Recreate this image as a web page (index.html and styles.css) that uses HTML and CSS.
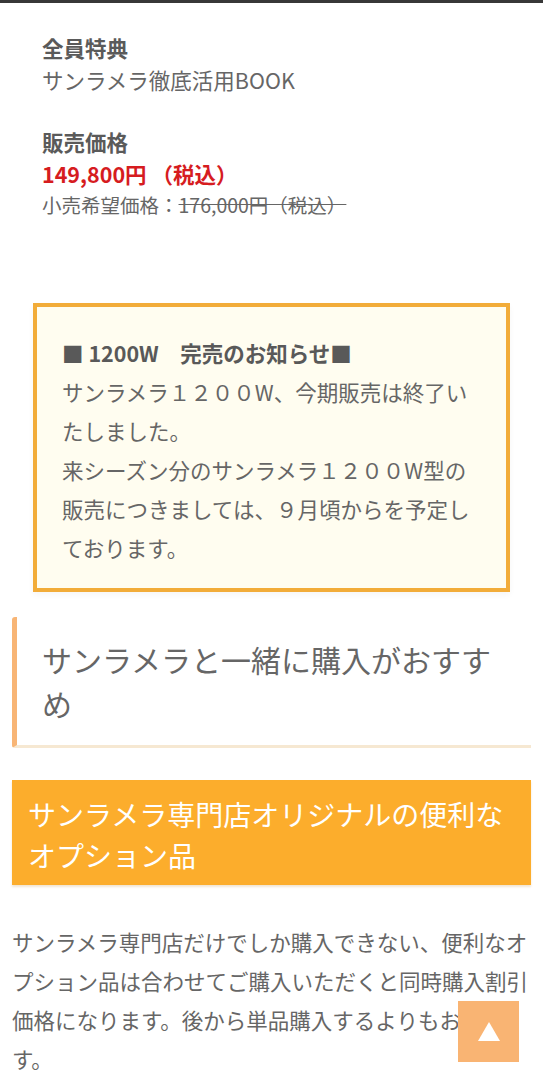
FILE: index.html
```html
<!DOCTYPE html>
<html lang="ja">
<head>
<meta charset="utf-8">
<title>サンラメラ</title>
<link rel="stylesheet" href="styles.css">
</head>
<body>
<div class="topbar"></div>
<main class="page">
  <section class="spec">
    <div class="spec-item">
      <div class="spec-label">全員特典</div>
      <div class="spec-value">サンラメラ徹底活用BOOK</div>
    </div>
    <div class="spec-item">
      <div class="spec-label">販売価格</div>
      <div class="price">149,800円 （税込）</div>
      <div class="list-price">小売希望価格：<s>176,000円（税込）</s></div>
    </div>
  </section>

  <div class="notice">
    <p><strong>■ 1200W　完売のお知らせ■</strong><br>サンラメラ１２００W、今期販売は終了いたしました。<br>来シーズン分のサンラメラ１２００W型の販売につきましては、９月頃からを予定しております。</p>
  </div>

  <h2 class="heading">サンラメラと一緒に購入がおすすめ</h2>

  <h3 class="band">サンラメラ専門店オリジナルの便利なオプション品</h3>

  <p class="lead">サンラメラ専門店だけでしか購入できない、便利なオプション品は合わせてご購入いただくと同時購入割引価格になります。後から単品購入するよりもお得です。</p>
</main>
<a class="to-top" href="#">
  <svg width="22" height="19" viewBox="0 0 22 19"><polygon points="11,0 22,19 0,19" fill="#fff"/></svg>
</a>
</body>
</html>
```

FILE: styles.css
```css
html, body {
  margin: 0;
  padding: 0;
  background: #fff;
}

body {
  font-family: "Noto Sans CJK JP", "Noto Sans", sans-serif;
  color: #666;
  font-size: 21.5px;
}

.topbar {
  height: 3px;
  background: #383838;
}

.page {
  padding: 0 12px 60px;
}

.spec {
  padding: 29px 0 0 30px;
  display: flex;
  flex-direction: column;
  gap: 31px;
}

.spec-item {
  line-height: 31.5px;
}

.spec-label {
  font-weight: bold;
  color: #5a5a5a;
  font-size: 21.5px;
}

.spec-value {
  font-size: 21.5px;
}

.price {
  color: #d61c1f;
  font-weight: bold;
  font-size: 21.5px;
}

.list-price {
  font-size: 19.5px;
}

.list-price s {
  text-decoration: line-through;
}

.notice {
  margin: 82px 21px 0;
  border: 4px solid #f2ac39;
  background: #fffdf0;
  padding: 26px 25px 21px;
  box-shadow: 0 3px 6px rgba(0, 0, 0, 0.04);
}

.notice p {
  margin: 0;
  line-height: 39px;
  font-size: 21.5px;
}

.notice strong {
  color: #595959;
}

.heading {
  margin: 25px 0 0;
  padding: 20px 25px 20px 25px;
  font-size: 30px;
  font-weight: normal;
  line-height: 44px;
  color: #666;
  border-left: 5px solid #f8b575;
  border-bottom: 3px solid #f6e8d2;
  border-radius: 3px 0 0 3px;
}

.band {
  margin: 32px 0 0;
  padding: 14px 16px 9px;
  background: #fcad2c;
  color: #fff;
  font-size: 28px;
  font-weight: normal;
  line-height: 41px;
  box-shadow: 0 2px 2px rgba(200, 150, 80, 0.25);
}

.lead {
  margin: 37px 0 0;
  line-height: 39px;
  font-size: 21.5px;
}

.to-top {
  position: fixed;
  right: 24px;
  bottom: 18px;
  width: 61px;
  height: 61px;
  background: #f9b473;
  display: flex;
  align-items: center;
  justify-content: center;
}
```
